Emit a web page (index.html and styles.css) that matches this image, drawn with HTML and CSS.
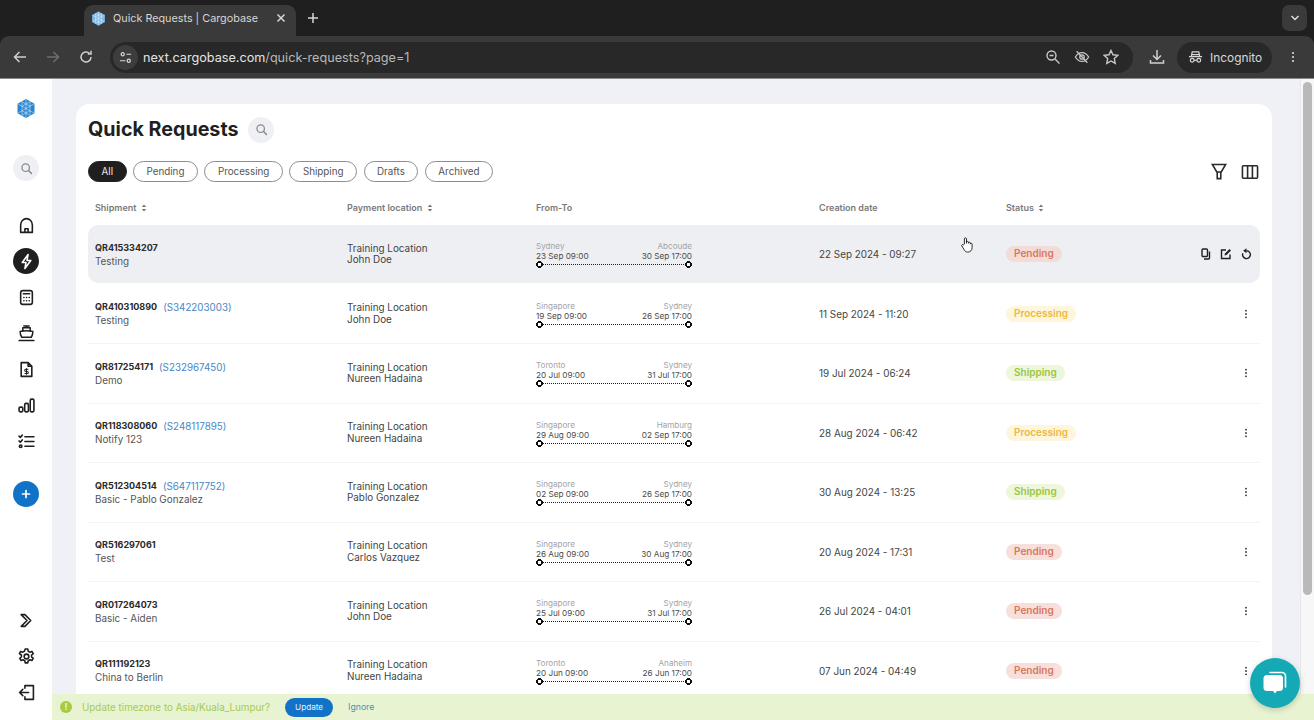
FILE: index.html
```html
<!DOCTYPE html>
<html lang="en">
<head>
<meta charset="utf-8">
<title>Quick Requests | Cargobase</title>
<link rel="stylesheet" href="styles.css">
</head>
<body>
<svg class="defs" width="0" height="0" aria-hidden="true">
  <symbol id="logo" viewBox="0 0 20 20">
    <path d="M10 .5l8.500 4.700v9.600L10 19.500l-8.500-4.700V5.200z" fill="currentColor"/>
    <path d="M10 1v18M2 5.500l16 9M18 5.500l-16 9M6 3.250v13.500M14 3.250v13.500M6 3.250l8 4.500M14 3.250l-8 4.500M6 16.750l8-4.500M14 16.750l-8-4.500" stroke="#fff" stroke-width=".55" fill="none" opacity=".8"/>
  </symbol>
  <symbol id="search" viewBox="0 0 16 16">
    <circle cx="7" cy="7" r="4.600" fill="none" stroke="currentColor" stroke-width="1.600"/>
    <path d="M10.500 10.500l3.500 3.500" stroke="currentColor" stroke-width="1.800" stroke-linecap="round"/>
  </symbol>
  <symbol id="sort" viewBox="0 0 6 9">
    <path d="M3 .5L5.500 3.500h-5zM3 8.500L.5 5.500h5z" fill="currentColor"/>
  </symbol>
  <symbol id="kebab" viewBox="0 0 4 12">
    <circle cx="2" cy="2" r="1.100" fill="currentColor"/><circle cx="2" cy="6" r="1.100" fill="currentColor"/><circle cx="2" cy="10" r="1.100" fill="currentColor"/>
  </symbol>
</svg>

<header class="chrome">
  <div class="tabstrip">
    <div class="tab">
      <svg class="tab-logo"><use href="#logo"/></svg>
      <span class="tab-title">Quick Requests | Cargobase</span>
      <svg class="tab-close" viewBox="0 0 10 10"><path d="M1.500 1.500l7 7M8.500 1.500l-7 7"/></svg>
    </div>
    <svg class="tab-new" viewBox="0 0 12 12"><path d="M6 1v10M1 6h10"/></svg>
    <div class="tab-menu"><svg viewBox="0 0 10 6"><path d="M1.500 1l3.500 3.500L8.500 1"/></svg></div>
  </div>
  <div class="toolbar">
    <svg class="tb-icon nav-back" viewBox="0 0 16 16"><path d="M14 8H2.500M7.500 3l-5 5 5 5"/></svg>
    <svg class="tb-icon nav-fwd" viewBox="0 0 16 16"><path d="M2 8h11.500M8.500 3l5 5-5 5"/></svg>
    <svg class="tb-icon nav-reload" viewBox="0 0 16 16"><path d="M13 8a5 5 0 1 1-1.600-3.700M13 1.800v3.200H9.800"/></svg>
    <div class="omnibox">
      <span class="site-btn"><svg viewBox="0 0 14 14"><circle cx="4" cy="3.500" r="1.700"/><path d="M8 3.500h5M1 10.500h6"/><circle cx="10.500" cy="10.500" r="1.700"/></svg></span>
      <span class="url">next.cargobase.com<span class="url-path">/quick-requests?page=1</span></span>
      <span class="omni-icons">
        <svg viewBox="0 0 16 16"><circle cx="6.500" cy="6.500" r="4.500"/><path d="M4.500 6.500h4M10 10l4.500 4.500"/></svg>
        <svg viewBox="0 0 18 16"><path d="M1.500 8S4.500 3 9 3s7.500 5 7.500 5-3 5-7.500 5-7.500-5-7.500-5z"/><circle cx="9" cy="8" r="2.500"/><path d="M3 1.500l12 13"/></svg>
        <svg viewBox="0 0 16 16"><path d="M8 1.500l2 4.300 4.700.6-3.400 3.200.9 4.700L8 12l-4.200 2.300.9-4.700L1.300 6.400 6 5.800z"/></svg>
      </span>
    </div>
    <svg class="tb-icon tb-download" viewBox="0 0 16 16"><path d="M8 1v9M4 6.500L8 10.500l4-4M1.500 11v3h13v-3"/></svg>
    <div class="incognito">
      <svg viewBox="0 0 16 14"><path d="M1 6.500h14M3.500 6.500l1-5h7l1 5M3.500 4.500h9"/><circle cx="4.500" cy="10.500" r="2"/><circle cx="11.500" cy="10.500" r="2"/><path d="M6.500 10.500h3"/></svg>
      <span>Incognito</span>
    </div>
    <svg class="tb-kebab"><use href="#kebab"/></svg>
  </div>
</header>

<div class="app">
  <nav class="sidebar">
    <svg class="side-logo"><use href="#logo"/></svg>
    <span class="side-search"><svg><use href="#search"/></svg></span>
    <div class="side-group">
      <span class="side-item"><svg viewBox="0 0 16 16"><path d="M2.500 14.500V7.500C2.500 4.500 5 1.500 8 1.500s5.500 3 5.500 6v7zM6.500 14.500v-3.500h3v3.500"/></svg></span>
      <span class="side-item side-active"><span class="side-disc"><svg viewBox="0 0 16 16"><path d="M9.500 1.500L4 9h3.500l-1 5.500L12 7H8.500z"/></svg></span></span>
      <span class="side-item"><svg viewBox="0 0 16 16"><rect x="2.500" y="1.500" width="11" height="13" rx="2"/><path d="M5 4.500h6M5.500 8h.1M8 8h.1M10.500 8h.1M5.500 11h.1M8 11h.1M10.500 11h.1"/></svg></span>
      <span class="side-item"><svg viewBox="0 0 16 16"><path d="M5.500 1h5M8 1v1.500M4.500 5.500v-3h7v3M2 6c.5 0 3-.5 6-.5s5.500.5 6 .5c0 2-.5 4-1.500 5.500h-9C2.500 10 2 8 2 6zM1 14.500h14" stroke-width="1.400"/></svg></span>
      <span class="side-item"><svg viewBox="0 0 16 16"><path d="M3 1.500h6.500l3.500 3.500v9.500H3zM9.500 1.500V5H13"/><path d="M9.500 7.800H7.300a1 1 0 0 0 0 2h1.400a1 1 0 0 1 0 2H6.500M8 7v5.500" stroke-width="1"/></svg></span>
      <span class="side-item"><svg viewBox="0 0 16 16"><rect x="1" y="9.500" width="3.500" height="4.500" rx="1.200"/><rect x="6.300" y="6" width="3.500" height="8" rx="1.200"/><rect x="11.500" y="2" width="3.500" height="12" rx="1.200"/></svg></span>
      <span class="side-item"><svg viewBox="0 0 16 16"><path d="M6.500 3.500H15M6.500 8H15M6.500 12.500H15M1 3l1.200 1.200L4 2M1 7.500l1.200 1.200L4 6.500"/><circle cx="2.500" cy="12.500" r="1.200"/></svg></span>
      <span class="side-item side-plus"><span class="side-disc side-disc-blue"><svg viewBox="0 0 12 12"><path d="M6 2.500v7M2.500 6h7"/></svg></span></span>
    </div>
    <div class="side-group side-bottom">
      <span class="side-item"><svg viewBox="0 0 16 16"><path d="M3 2.500h3.500L12 8l-5.500 5.500H3L8.500 8z"/></svg></span>
      <span class="side-item"><svg viewBox="0 0 16 16"><circle cx="8" cy="8" r="2.200"/><path d="M6.800 1h2.400l.4 2 1.600.9 1.900-.7 1.200 2.100-1.500 1.300v1.800l1.500 1.300-1.200 2.100-1.900-.7-1.600.9-.4 2H6.800l-.4-2-1.600-.9-1.900.7-1.200-2.100 1.500-1.300V6.600L1.300 5.300l1.200-2.100 1.900.7 1.600-.9z"/></svg></span>
      <span class="side-item"><svg viewBox="0 0 16 16"><path d="M6.500 4V1.500h8v13h-8V12M10 8H1.500M4.500 5l-3 3 3 3"/></svg></span>
    </div>
  </nav>

  <main class="content">
    <section class="card">
      <div class="title-row">
        <h1 class="title">Quick Requests</h1>
        <span class="title-search"><svg><use href="#search"/></svg></span>
      </div>
      <div class="filter-row">
        <div class="chips">
          <span class="chip chip-on">All</span>
          <span class="chip">Pending</span>
          <span class="chip">Processing</span>
          <span class="chip">Shipping</span>
          <span class="chip">Drafts</span>
          <span class="chip">Archived</span>
        </div>
        <div class="tools">
          <svg class="tool-filter" viewBox="0 0 18 20"><path d="M1.500 1.500h15L11.500 10h-5zM7 10h4v7.500H7z"/></svg>
          <svg class="tool-cols" viewBox="0 0 20 18"><rect x="1.500" y="2" width="17" height="14" rx="1"/><path d="M7.300 2v14M12.700 2v14"/></svg>
        </div>
      </div>
      <div class="grid head">
        <span>Shipment <svg class="sort"><use href="#sort"/></svg></span>
        <span>Payment location <svg class="sort"><use href="#sort"/></svg></span>
        <span>From-To</span>
        <span>Creation date</span>
        <span>Status <svg class="sort"><use href="#sort"/></svg></span>
      </div>

      <div class="grid row row-hover">
        <div class="ship"><div class="qr"><b>QR415334207</b></div><div class="sub">Testing</div></div>
        <div class="loc"><div>Training Location</div><div>John Doe</div></div>
        <div class="route"><div class="ends ends-city"><span>Sydney</span><span>Abcoude</span></div><div class="ends ends-date"><span>23 Sep 09:00</span><span>30 Sep 17:00</span></div><div class="track"></div></div>
        <div class="date">22 Sep 2024 - 09:27</div>
        <div class="status-cell"><span class="pill pending">Pending</span>
          <span class="acts">
            <svg viewBox="0 0 12 12"><rect x="2" y="1" width="5.500" height="7.500" rx="1"/><path d="M9.500 3.500V10a1 1 0 0 1-1 1H4"/></svg>
            <svg viewBox="0 0 12 12"><path d="M6 2H1.500v8.500H10V6.500"/><path class="solid" d="M4.500 7.500L5 5.500 9.500 1l1.500 1.500L6.500 7z"/></svg>
            <svg class="act-redo" viewBox="0 0 12 12"><path d="M6.500 2.800a3.900 3.900 0 1 1-3.600 2.400"/><path class="solid" d="M6.500 .3v5L3.200 2.800z"/></svg>
          </span>
        </div>
      </div>

      <div class="grid row">
        <div class="ship"><div class="qr"><b>QR410310890</b><a>(S342203003)</a></div><div class="sub">Testing</div></div>
        <div class="loc"><div>Training Location</div><div>John Doe</div></div>
        <div class="route"><div class="ends ends-city"><span>Singapore</span><span>Sydney</span></div><div class="ends ends-date"><span>19 Sep 09:00</span><span>26 Sep 17:00</span></div><div class="track"></div></div>
        <div class="date">11 Sep 2024 - 11:20</div>
        <div class="status-cell"><span class="pill processing">Processing</span><svg class="kebab"><use href="#kebab"/></svg></div>
      </div>

      <div class="grid row">
        <div class="ship"><div class="qr"><b>QR817254171</b><a>(S232967450)</a></div><div class="sub">Demo</div></div>
        <div class="loc"><div>Training Location</div><div>Nureen Hadaina</div></div>
        <div class="route"><div class="ends ends-city"><span>Toronto</span><span>Sydney</span></div><div class="ends ends-date"><span>20 Jul 09:00</span><span>31 Jul 17:00</span></div><div class="track"></div></div>
        <div class="date">19 Jul 2024 - 06:24</div>
        <div class="status-cell"><span class="pill shipping">Shipping</span><svg class="kebab"><use href="#kebab"/></svg></div>
      </div>

      <div class="grid row">
        <div class="ship"><div class="qr"><b>QR118308060</b><a>(S248117895)</a></div><div class="sub">Notify 123</div></div>
        <div class="loc"><div>Training Location</div><div>Nureen Hadaina</div></div>
        <div class="route"><div class="ends ends-city"><span>Singapore</span><span>Hamburg</span></div><div class="ends ends-date"><span>29 Aug 09:00</span><span>02 Sep 17:00</span></div><div class="track"></div></div>
        <div class="date">28 Aug 2024 - 06:42</div>
        <div class="status-cell"><span class="pill processing">Processing</span><svg class="kebab"><use href="#kebab"/></svg></div>
      </div>

      <div class="grid row">
        <div class="ship"><div class="qr"><b>QR512304514</b><a>(S647117752)</a></div><div class="sub">Basic - Pablo Gonzalez</div></div>
        <div class="loc"><div>Training Location</div><div>Pablo Gonzalez</div></div>
        <div class="route"><div class="ends ends-city"><span>Singapore</span><span>Sydney</span></div><div class="ends ends-date"><span>02 Sep 09:00</span><span>26 Sep 17:00</span></div><div class="track"></div></div>
        <div class="date">30 Aug 2024 - 13:25</div>
        <div class="status-cell"><span class="pill shipping">Shipping</span><svg class="kebab"><use href="#kebab"/></svg></div>
      </div>

      <div class="grid row">
        <div class="ship"><div class="qr"><b>QR516297061</b></div><div class="sub">Test</div></div>
        <div class="loc"><div>Training Location</div><div>Carlos Vazquez</div></div>
        <div class="route"><div class="ends ends-city"><span>Singapore</span><span>Sydney</span></div><div class="ends ends-date"><span>26 Aug 09:00</span><span>30 Aug 17:00</span></div><div class="track"></div></div>
        <div class="date">20 Aug 2024 - 17:31</div>
        <div class="status-cell"><span class="pill pending">Pending</span><svg class="kebab"><use href="#kebab"/></svg></div>
      </div>

      <div class="grid row">
        <div class="ship"><div class="qr"><b>QR017264073</b></div><div class="sub">Basic - Aiden</div></div>
        <div class="loc"><div>Training Location</div><div>John Doe</div></div>
        <div class="route"><div class="ends ends-city"><span>Singapore</span><span>Sydney</span></div><div class="ends ends-date"><span>25 Jul 09:00</span><span>31 Jul 17:00</span></div><div class="track"></div></div>
        <div class="date">26 Jul 2024 - 04:01</div>
        <div class="status-cell"><span class="pill pending">Pending</span><svg class="kebab"><use href="#kebab"/></svg></div>
      </div>

      <div class="grid row">
        <div class="ship"><div class="qr"><b>QR111192123</b></div><div class="sub">China to Berlin</div></div>
        <div class="loc"><div>Training Location</div><div>Nureen Hadaina</div></div>
        <div class="route"><div class="ends ends-city"><span>Toronto</span><span>Anaheim</span></div><div class="ends ends-date"><span>20 Jun 09:00</span><span>26 Jun 17:00</span></div><div class="track"></div></div>
        <div class="date">07 Jun 2024 - 04:49</div>
        <div class="status-cell"><span class="pill pending">Pending</span><svg class="kebab"><use href="#kebab"/></svg></div>
      </div>
    </section>
  </main>

  <div class="scrollbar"><div class="thumb"></div></div>

  <svg class="cursor" viewBox="0 0 16 20"><path d="M5 9V3a1.200 1.200 0 0 1 2.400 0v5l0-1a1.100 1.100 0 0 1 2.200 0v1a1.100 1.100 0 0 1 2.200 0v1a1 1 0 0 1 2 0v4c0 3-2 5-4.500 5H8.500c-2 0-3-1-4-3L2 11c-.6-1.200.9-2 1.700-1z"/></svg>

  <div class="tz-bar">
    <span class="tz-dot">!</span>
    <span class="tz-text">Update timezone to Asia/Kuala_Lumpur?</span>
    <span class="tz-btn">Update</span>
    <span class="tz-ignore">Ignore</span>
  </div>

  <div class="chat">
    <svg viewBox="0 0 28 28"><path d="M9 3.500h12a3.500 3.500 0 0 1 3.500 3.500v11" fill="none" stroke="#fff" stroke-width="1.600" stroke-linecap="round"/><path d="M6 6h12.500A3.500 3.500 0 0 1 22 9.500v9a3.500 3.500 0 0 1-3.500 3.500H16l-2 2.500-2-2.500H6a3.500 3.500 0 0 1-3.500-3.500v-9A3.500 3.500 0 0 1 6 6z" fill="#fff"/></svg>
  </div>
</div>
</body>
</html>
```
FILE: styles.css
```css
* { box-sizing: border-box; }
html, body { margin: 0; height: 100%; overflow: hidden; }
body {
  display: flex;
  flex-direction: column;
  font-family: Inter, "Liberation Sans", sans-serif;
  color: #333;
  background: #fff;
}
.defs { position: absolute; }

/* browser chrome */
.chrome { flex: none; height: 79px; background: #1f1f1f; color: #d8d8d8; }
.tabstrip { height: 36px; display: flex; align-items: flex-end; padding-left: 84px; position: relative; }
.tab {
  width: 212px; height: 31px; background: #3a3a3a; border-radius: 9px 9px 0 0;
  display: flex; align-items: center; padding: 0 0 5px 7px;
}
.tab-logo { width: 15px; height: 15px; color: #7db8e8; flex: none; }
.tab-title { margin-left: 7px; font-size: 10.800px; color: #d6d6d6; white-space: nowrap; }
.tab-close { width: 10px; height: 10px; margin-left: 18px; fill: none; stroke: #d8d8d8; stroke-width: 1.500; }
.tab-new { width: 12px; height: 12px; margin: 0 0 12px 11px; fill: none; stroke: #d8d8d8; stroke-width: 1.500; }
.tab-menu {
  position: absolute; left: 1282px; top: 5px; width: 25px; height: 26px; border-radius: 7px;
  background: #3a3a3a; display: flex; align-items: center; justify-content: center;
}
.tab-menu svg { width: 10px; height: 6px; fill: none; stroke: #e0e0e0; stroke-width: 1.500; }
.toolbar {
  height: 43px; background: #3a3a3a; border-radius: 9px 9px 0 0;
  display: flex; align-items: center; padding: 0 0 0 12px;
  border-bottom: 1px solid #8a8a8a;
}
.tb-icon { width: 16px; height: 16px; flex: none; fill: none; stroke: #d0d0d0; stroke-width: 1.500; }
.nav-fwd { margin-left: 17px; stroke: #6e6e6e; }
.nav-reload { margin-left: 17px; }
.omnibox {
  width: 1023px; height: 31px; margin-left: 16px; background: #282828; border-radius: 16px;
  display: flex; align-items: center; padding: 0 14px 0 3px; flex: none;
}
.site-btn {
  width: 25px; height: 25px; border-radius: 50%; background: #3d3d3d;
  display: flex; align-items: center; justify-content: center; flex: none;
}
.site-btn svg { width: 13px; height: 13px; fill: none; stroke: #d8d8d8; stroke-width: 1.300; }
.url { margin-left: 5px; font-size: 12.650px; color: #e4e4e4; white-space: nowrap; }
.url-path { color: #b8b8b8; }
.omni-icons { margin-left: auto; display: flex; align-items: center; gap: 13px; }
.omni-icons svg { width: 16px; height: 16px; fill: none; stroke: #c8c8c8; stroke-width: 1.400; }
.tb-download { margin-left: 16px; }
.incognito {
  width: 95px; height: 31px; margin-left: 12px; background: #282828; border-radius: 16px;
  display: flex; align-items: center; padding-left: 11px; gap: 7px; font-size: 11.900px; color: #d8d8d8; flex: none;
}
.incognito svg { width: 15px; height: 14px; fill: none; stroke: #d8d8d8; stroke-width: 1.300; }
.tb-kebab { width: 4px; height: 12px; margin-left: 19px; color: #d8d8d8; }

/* app frame */
.app { flex: 1; min-height: 0; display: flex; position: relative; overflow: hidden; }
.sidebar {
  flex: none; width: 52px; background: #fff; display: flex; flex-direction: column; align-items: center;
  padding: 19px 0 10px;
}
.side-logo { width: 20px; height: 21px; color: #2b86cf; flex: none; }
.side-search {
  width: 26px; height: 26px; margin-top: 36px; border-radius: 50%; background: #eff0f4;
  display: flex; align-items: center; justify-content: center; color: #8a8a90; flex: none;
}
.side-search svg { width: 13px; height: 13px; }
.side-group { margin-top: 26px; display: flex; flex-direction: column; align-items: center; }
.side-bottom { margin-top: auto; }
.side-item { width: 36px; height: 36px; display: flex; align-items: center; justify-content: center; flex: none; }
.side-item svg { width: 17px; height: 17px; fill: none; stroke: #1f1f1f; stroke-width: 1.500; stroke-linejoin: round; stroke-linecap: round; }
.side-disc { width: 26px; height: 26px; border-radius: 50%; background: #1f1f1f; display: flex; align-items: center; justify-content: center; }
.side-active svg { stroke: #fff; }
.side-disc-blue { background: #1173c8; }
.side-disc-blue svg { width: 12px; height: 12px; stroke: #fff; stroke-width: 1.700; }
.side-plus { margin-top: 17px; }

.content { flex: 1; min-width: 0; background: #f0f1f6; padding: 25px 28px 0 24px; overflow: hidden; }
.card { background: #fff; border-radius: 14px; padding: 12px 12px 0; height: 640px; }
.title-row { display: flex; align-items: center; height: 27px; }
.title { margin: 0; font-size: 19.700px; line-height: 27px; font-weight: 700; color: #1f1f1f; }
.title-search {
  width: 26px; height: 26px; margin-left: 10px; border-radius: 50%; background: #eff0f4;
  display: flex; align-items: center; justify-content: center; color: #8a8a90;
}
.title-search svg { width: 13px; height: 13px; }
.filter-row { display: flex; align-items: center; margin-top: 18px; height: 21px; }
.chips { display: flex; gap: 6.500px; }
.chip {
  height: 21.500px; padding: 0 12.500px; border: 1px solid #8d8d8d; border-radius: 11px;
  font-size: 9.800px; line-height: 19.500px; color: #555; background: #fff; white-space: nowrap;
}
.chip-on { background: #1f1f1f; border-color: #1f1f1f; color: #e8e8e8; }
.tools { margin-left: auto; display: flex; align-items: center; gap: 14px; padding-right: 1px; }
.tools svg { fill: none; stroke: #2a2a2a; stroke-width: 1.800; }
.tool-filter { width: 16px; height: 18px; }
.tool-cols { width: 18px; height: 16px; }

.grid { display: grid; grid-template-columns: 252px 189px 283px 187px 1fr; padding-left: 7px; align-items: center; }
.head { height: 43px; padding-top: 7px; font-size: 9px; font-weight: 600; color: #7a7a7a; white-space: nowrap; }
.sort { width: 6px; height: 8px; margin-left: 2px; color: #777; vertical-align: -1px; }
.row { height: 59.500px; border-bottom: 1px solid #f3f3f5; }
.row-hover { height: 58px; margin-bottom: 1.500px; background: #eeeff3; border-radius: 10px; border-bottom: 0; }

.ship { font-size: 9.900px; color: #555; }
.qr { display: flex; align-items: baseline; height: 14px; line-height: 14px; }
.qr b { font-size: 9px; font-weight: 700; color: #2a2a2a; }
.qr a { margin-left: 6px; color: #4a86c5; font-size: 9.800px; position: relative; top: 1px; }
.sub { margin-top: -1px; line-height: 14px; }
.loc { font-size: 9.900px; line-height: 11.500px; color: #444; }
.route { width: 156px; padding-top: 1px; }
.ends { display: flex; justify-content: space-between; line-height: 10px; white-space: nowrap; }
.ends-city { color: #a3a3a8; font-size: 8.100px; }
.ends-date { color: #4a4a4a; font-size: 8.200px; }
.track { height: 7px; position: relative; }
.track::before {
  content: ""; position: absolute; left: 4px; right: 4px; top: 3px;
  border-top: 1.500px dotted #222;
}
.track::after {
  content: ""; position: absolute; left: 0; right: 0; top: 0; height: 7px;
  background:
    radial-gradient(circle at 3.500px 3.500px, #fff 1.600px, #111 1.900px, #111 3.200px, transparent 3.500px) left / 7px 7px no-repeat,
    radial-gradient(circle at 3.500px 3.500px, #fff 1.600px, #111 1.900px, #111 3.200px, transparent 3.500px) right / 7px 7px no-repeat;
}
.date { font-size: 9.900px; color: #444; white-space: nowrap; }
.status-cell { display: flex; align-items: center; justify-content: space-between; padding-right: 10px; }
.pill { height: 16px; padding: 0 8px; border-radius: 8px; font-size: 10px; line-height: 15px; font-weight: 600; white-space: nowrap; }
.pending { background: #f7dfdb; color: #d8775c; }
.processing { background: #fdf5dc; color: #eeb93f; }
.shipping { background: #eef6dc; color: #99c63e; }
.row-hover .pending { background: #f3dcd8; }
.kebab { width: 4px; height: 10px; color: #333; margin-right: 2px; }
.acts { display: flex; gap: 8px; margin-right: -2px; }
.acts svg { width: 12px; height: 12px; fill: none; stroke: #1f1f1f; stroke-width: 1.400; }
.acts .solid { fill: #1f1f1f; stroke: none; }

.scrollbar { flex: none; width: 14px; background: #f7f7f7; border-left: 1px solid #e8e8e8; padding: 3px 2px 0 1.500px; }
.thumb { height: 513px; background: #b9b9b9; border-radius: 5px; }

/* overlays */
.cursor { position: absolute; left: 960px; top: 157px; width: 14px; height: 18px; fill: #fff; stroke: #222; stroke-width: 1.100; }
.tz-bar {
  position: absolute; left: 52px; right: 0; bottom: 0; height: 26px; background: #e8f3d1;
  display: flex; align-items: center; padding-left: 8px; font-size: 9.850px;
}
.tz-dot {
  width: 12px; height: 12px; border-radius: 50%; background: #a6cc45; color: #eef6d8;
  font-size: 9px; font-weight: 700; line-height: 12px; text-align: center; flex: none;
}
.tz-text { margin-left: 10px; color: #a5cc52; white-space: nowrap; }
.tz-btn {
  margin-left: 15px; width: 48px; height: 19px; border-radius: 10px; background: #1173c8; color: #e6f0fa;
  font-size: 8.200px; line-height: 19px; text-align: center; flex: none;
}
.tz-ignore { margin-left: 15px; color: #4a90c9; font-size: 8.700px; }
.chat {
  position: absolute; left: 1250px; top: 579px; width: 50px; height: 50px; border-radius: 50%; background: #14a9b5;
  box-shadow: 0 2px 6px rgba(0,0,0,.18);
  display: flex; align-items: center; justify-content: center;
}
.chat svg { width: 28px; height: 28px; }
```
